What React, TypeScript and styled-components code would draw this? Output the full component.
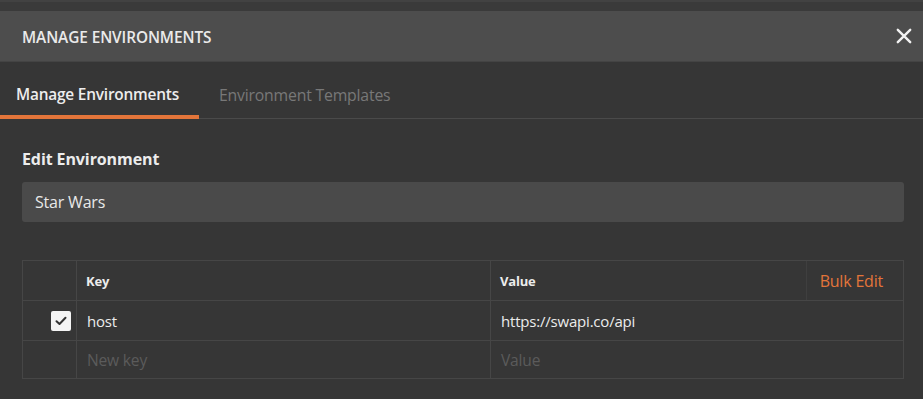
import React from "react";
import styled, { createGlobalStyle } from "styled-components";

const Global = createGlobalStyle`
  html, body { margin: 0; padding: 0; background: #363636; }
  body { font-family: "Open Sans", "Liberation Sans", sans-serif; -webkit-font-smoothing: antialiased; }
  * { box-sizing: border-box; }
`;

const Modal = styled.div`
  width: 923px;
  height: 399px;
  background: #363636;
  display: flex;
  flex-direction: column;
  overflow: hidden;
`;

const TopStrip = styled.div`
  height: 11px;
  background: #3a3a3a;
  border-top: 2px solid #424242;
`;

const Header = styled.div`
  height: 51px;
  background: #4d4d4d;
  border-bottom: 1px solid #444444;
  display: flex;
  align-items: center;
  justify-content: space-between;
  padding: 0 7px 0 22px;
`;

const Title = styled.div`
  color: #eaeaea;
  font-size: 15.4px;
  font-weight: 600;
  letter-spacing: -0.1px;
  padding-top: 2px;
`;

const Close = styled.button`
  background: none;
  border: none;
  padding: 0;
  width: 24px;
  height: 24px;
  display: flex;
  align-items: center;
  justify-content: center;
  cursor: pointer;
`;

const Tabs = styled.div`
  height: 57px;
  display: flex;
  align-items: stretch;
  border-bottom: 1px solid #4a4a4a;
`;

const Tab = styled.div<{ $active?: boolean }>`
  display: flex;
  align-items: center;
  padding: 12px 20px 0 ${(p) => (p.$active ? "16px" : "20px")};
  font-size: ${(p) => (p.$active ? "15.4px" : "15.8px")};
  font-weight: ${(p) => (p.$active ? 600 : 400)};
  color: ${(p) => (p.$active ? "#ededed" : "#787878")};
  border-bottom: 4px solid ${(p) => (p.$active ? "#e3753a" : "transparent")};
  margin-bottom: -1px;
  letter-spacing: -0.2px;
`;

const Body = styled.div`
  padding: 29px 19px 0 22px;
  display: flex;
  flex-direction: column;
`;

const Label = styled.div`
  color: #ececec;
  font-size: 16px;
  font-weight: 700;
  height: 22px;
  line-height: 22px;
  letter-spacing: -0.1px;
`;

const NameInput = styled.div`
  margin-top: 12px;
  height: 40px;
  background: #4a4a4a;
  border-radius: 3px;
  display: flex;
  align-items: center;
  padding-left: 13px;
  color: #e8e8e8;
  font-size: 16px;
  letter-spacing: -0.2px;
`;

const Table = styled.div`
  margin-top: 38px;
  border: 1px solid #464646;
  display: flex;
  flex-direction: column;
`;

const Row = styled.div<{ $last?: boolean }>`
  height: ${(p) => (p.$last ? "37px" : "40px")};
  display: grid;
  grid-template-columns: 53px 414px 1fr;
  border-bottom: ${(p) => (p.$last ? "none" : "1px solid #464646")};
`;

const Cell = styled.div<{ $first?: boolean; $head?: boolean; $muted?: boolean }>`
  display: flex;
  align-items: center;
  padding-left: ${(p) => (p.$first ? "0" : p.$head ? "9px" : "10px")};
  justify-content: ${(p) => (p.$first ? "flex-end" : "flex-start")};
  padding-right: ${(p) => (p.$first ? "5px" : "0")};
  border-left: ${(p) => (p.$first ? "none" : "1px solid #464646")};
  color: ${(p) => (p.$muted ? "#5b5b5b" : "#ececec")};
  font-size: ${(p) => (p.$head ? "13px" : p.$muted ? "15.6px" : "15px")};
  font-weight: ${(p) => (p.$head ? 700 : 400)};
  letter-spacing: -0.2px;
`;

const ValueHead = styled(Cell)`
  justify-content: space-between;
  padding-right: 0;
`;

const BulkEdit = styled.div`
  height: 100%;
  display: flex;
  align-items: center;
  padding: 0 20px 0 13px;
  border-left: 1px solid #3f3f3f;
  color: #e3753a;
  font-size: 16px;
  font-weight: 400;
  letter-spacing: -0.2px;
`;

const Check = styled.div`
  width: 20px;
  height: 20px;
  border-radius: 2px;
  background: #f4f4f4;
  display: flex;
  align-items: center;
  justify-content: center;
`;

export default function App() {
  return (
    <>
      <Global />
      <Modal>
        <TopStrip />
        <Header>
          <Title>MANAGE ENVIRONMENTS</Title>
          <Close aria-label="Close">
            <svg width="16" height="16" viewBox="0 0 16 16">
              <path d="M1.8 1.8 L14.2 14.2 M14.2 1.8 L1.8 14.2" stroke="#f2f2f2" strokeWidth="2.4" strokeLinecap="round" />
            </svg>
          </Close>
        </Header>
        <Tabs>
          <Tab $active>Manage Environments</Tab>
          <Tab>Environment Templates</Tab>
        </Tabs>
        <Body>
          <Label>Edit Environment</Label>
          <NameInput>Star Wars</NameInput>
          <Table>
            <Row>
              <Cell $first />
              <Cell $head>Key</Cell>
              <ValueHead $head>
                <span>Value</span>
                <BulkEdit>Bulk Edit</BulkEdit>
              </ValueHead>
            </Row>
            <Row>
              <Cell $first>
                <Check>
                  <svg width="12" height="10" viewBox="0 0 12 10">
                    <path d="M1.5 5.2 L4.5 8 L10.5 1.8" fill="none" stroke="#333" strokeWidth="2" strokeLinecap="round" strokeLinejoin="round" />
                  </svg>
                </Check>
              </Cell>
              <Cell>host</Cell>
              <Cell>https://swapi.co/api</Cell>
            </Row>
            <Row $last>
              <Cell $first />
              <Cell $muted>New key</Cell>
              <Cell $muted>Value</Cell>
            </Row>
          </Table>
        </Body>
      </Modal>
    </>
  );
}
